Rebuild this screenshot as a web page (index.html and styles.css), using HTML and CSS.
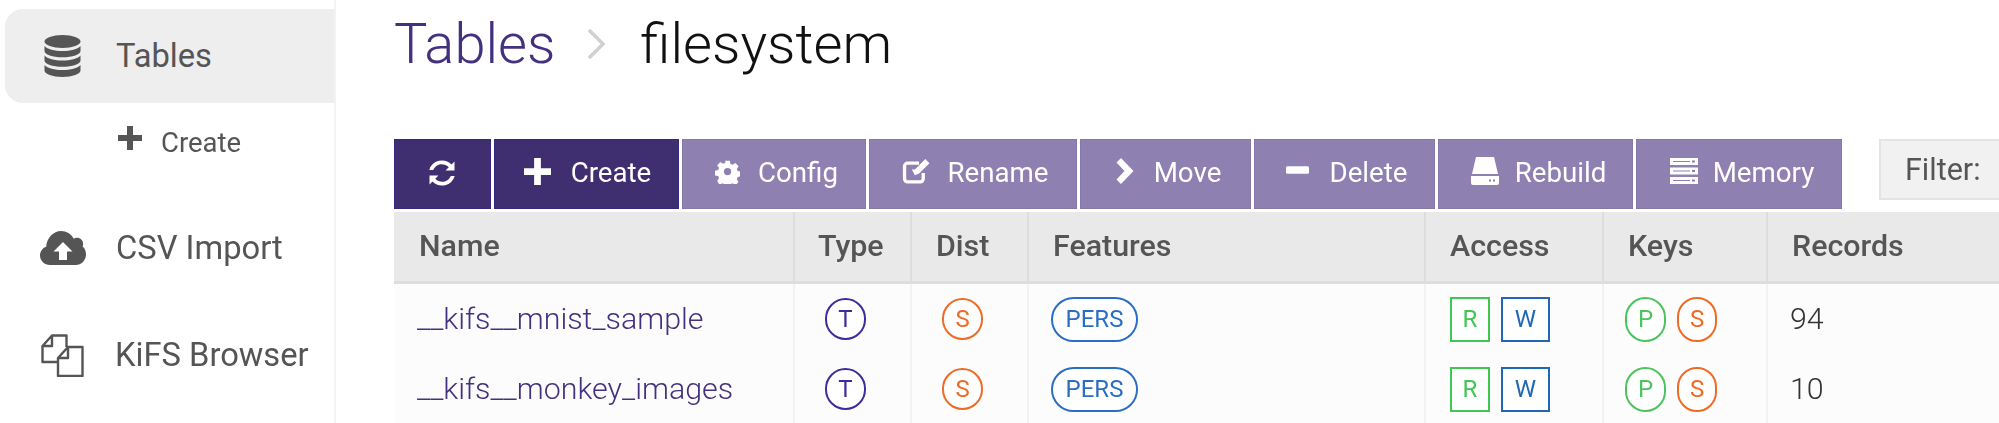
FILE: index.html
```html
<!DOCTYPE html>
<html lang="en">
<head>
<meta charset="utf-8">
<title>Tables - filesystem</title>
<link rel="stylesheet" href="styles.css">
</head>
<body>
<div class="app">
  <nav class="sidebar">
    <a class="nav-item active">
      <svg class="nav-icon" viewBox="0 0 37 42"><path d="M18.5 0C8.5 0 .5 3 .5 6.5S8.5 13 18.500 13s18-3 18-6.500S28.500 0 18.500 0z"/><path d="M.5 11v5c0 3.500 8 6.300 18 6.300s18-2.800 18-6.300v-5c-3 3.400-10 5-18 5S3.500 14.400.5 11z"/><path d="M.5 20.500v5c0 3.500 8 6.300 18 6.300s18-2.800 18-6.300v-5c-3 3.400-10 5-18 5s-15-1.600-18-5z"/><path d="M.5 30v5.500c0 3.500 8 6.500 18 6.500s18-3 18-6.500V30c-3 3.400-10 5-18 5S3.500 33.400.5 30z"/></svg>
      <span>Tables</span>
    </a>
    <a class="nav-sub">
      <svg class="sub-icon" viewBox="0 0 24 24"><path d="M9 0h6v9h9v6h-9v9H9v-9H0V9h9z"/></svg>
      <span>Create</span>
    </a>
    <a class="nav-item csv">
      <svg class="nav-icon cloud" viewBox="0 0 46 34"><path fill-rule="evenodd" d="M10 34C4.500 34 0 29.800 0 24.500c0-4 2.500-7.500 6.200-8.800C6.700 7 13.500 0 21 0c5.500 0 10.300 3 12.700 7.700 1-.6 2-.9 3.200-.9 3.500 0 6.200 2.700 6.200 6.100 0 .9-.2 1.700-.5 2.500 2.400 1.800 3.400 5 3.400 8.100 0 5.800-4.500 10.500-10.500 10.500zM23 11l-9.500 9.500H19V29h8v-8.500h5.500z"/></svg>
      <span>CSV Import</span>
    </a>
    <a class="nav-item kifs">
      <svg class="nav-icon files" viewBox="0 0 43 43"><path fill="none" stroke="#555" stroke-width="2.400" stroke-linejoin="round" d="M17 28H1.500V12L11 1.500h14.500V13M11 1.500V12H1.500M17 42V24L27 13h14.500v29zM27 13v11H17"/></svg>
      <span>KiFS Browser</span>
    </a>
  </nav>
  <main class="content">
    <h1 class="crumbs">
      <span class="crumb-link">Tables</span>
      <svg class="crumb-sep" viewBox="0 0 18 32"><path d="M2 2l14 14L2 30" fill="none" stroke="#d0d0d0" stroke-width="3.500"/></svg>
      <span class="crumb-current">filesystem</span>
    </h1>
    <div class="toolbar">
      <button class="btn dark b-refresh"><svg class="ic" viewBox="0 0 28 28"><path d="M26.500 2.500v9h-9l3.300-3.300A9.400 9.400 0 0 0 5.200 11H1.300A13.200 13.200 0 0 1 23.500 5.500zM1.500 25.500v-9h9l-3.300 3.300A9.400 9.400 0 0 0 22.800 17h3.900A13.200 13.200 0 0 1 4.500 22.500z"/></svg></button>
      <button class="btn dark b-create"><svg class="ic" viewBox="0 0 24 24"><path d="M9 0h6v9h9v6h-9v9H9v-9H0V9h9z"/></svg><span>Create</span></button>
      <button class="btn b-config"><svg class="ic" viewBox="0 0 24 24"><path fill-rule="evenodd" d="M9.500 0h5l.8 3.600 2.300 1 3.100-2 3.500 3.500-2 3.100 1 2.300 3.600.8v5l-3.600.8-1 2.300 2 3.100-3.500 3.500-3.100-2-2.300 1-.8 3.600h-5l-.8-3.600-2.300-1-3.100 2L.6 22.400l2-3.100-1-2.300-3.600-.8v-5l3.600-.8 1-2.300-2-3.100L4.100 1.500l3.100 2 2.300-1zM12 8a4 4 0 1 0 0 8 4 4 0 0 0 0-8z" transform="translate(1.600 1.600) scale(.87)"/></svg><span>Config</span></button>
      <button class="btn b-rename"><svg class="ic" viewBox="0 0 28 26"><path d="M20 14.500v5.500a3 3 0 0 1-3 3H5a3 3 0 0 1-3-3V8a3 3 0 0 1 3-3h11" fill="none" stroke="#fff" stroke-width="3.200"/><path d="M9 12l3 0 10-10 4 4-10 10-4 1.500z" transform="translate(0 -1)"/></svg><span>Rename</span></button>
      <button class="btn b-move"><svg class="ic" viewBox="0 0 18 26"><path d="M5 0l12.500 13L5 26l-4.500-4.500L8.500 13 .5 4.500z"/></svg><span>Move</span></button>
      <button class="btn b-delete"><svg class="ic" viewBox="0 0 24 8"><rect width="24" height="8" rx="1.500"/></svg><span>Delete</span></button>
      <button class="btn b-rebuild"><svg class="ic" viewBox="0 0 30 28"><path d="M6 0h18l4 17H2z"/><path fill-rule="evenodd" d="M1 19h28v7a2 2 0 0 1-2 2H3a2 2 0 0 1-2-2zM19 22.500v2h2v-2zm4 0v2h2v-2z"/></svg><span>Rebuild</span></button>
      <button class="btn b-memory"><svg class="ic" viewBox="0 0 30 28"><path fill-rule="evenodd" d="M1 1h28v7H1zM4 4v1h17V4zM23 3.500v2h3v-2zM1 10.500h28v7H1zM4 13.500v1h17v-1zM23 13v2h3v-2zM1 20h28v7H1zM4 23v1h17v-1zM23 22.500v2h3v-2z"/></svg><span>Memory</span></button>
      <div class="filter">Filter:</div>
    </div>
    <div class="grid header">
      <div>Name</div><div class="h-type">Type</div><div>Dist</div><div>Features</div><div>Access</div><div>Keys</div><div>Records</div>
    </div>
    <div class="grid row">
      <div class="name">__kifs__mnist_sample</div>
      <div class="c-type"><i class="pill type">T</i></div>
      <div class="c-dist"><i class="pill dist">S</i></div>
      <div class="c-feat"><i class="pill feat">PERS</i></div>
      <div class="c-access"><i class="box read">R</i><i class="box write">W</i></div>
      <div class="c-keys"><i class="pill key-p">P</i><i class="pill key-s">S</i></div>
      <div class="num">94</div>
    </div>
    <div class="grid row">
      <div class="name">__kifs__monkey_images</div>
      <div class="c-type"><i class="pill type">T</i></div>
      <div class="c-dist"><i class="pill dist">S</i></div>
      <div class="c-feat"><i class="pill feat">PERS</i></div>
      <div class="c-access"><i class="box read">R</i><i class="box write">W</i></div>
      <div class="c-keys"><i class="pill key-p">P</i><i class="pill key-s">S</i></div>
      <div class="num">10</div>
    </div>
  </main>
</div>
</body>
</html>
```
FILE: styles.css
```css
* { box-sizing: border-box; }
html, body { margin: 0; height: 423px; overflow: hidden; background: #fff; }
body { font-family: Roboto, sans-serif; color: #555; text-rendering: optimizeLegibility; }
.app { display: flex; height: 423px; filter: blur(0.4px); }

.sidebar { width: 336px; flex: none; padding: 9px 0 0 5px; border-right: 2px solid #f3f3f3; }
.nav-item { display: flex; align-items: center; height: 94px; padding-left: 39px; font-size: 32.7px; color: #555; }
.nav-item.active { background: #eee; border-radius: 18px 0 0 18px; padding-bottom: 1px; }
.nav-item.csv { margin-top: 25px; height: 90px; }
.nav-item.kifs { margin-top: 17px; height: 90px; }
.nav-icon { width: 37px; height: 42px; margin-right: 35px; fill: #555; flex: none; }
.nav-icon.cloud { width: 46px; height: 34px; margin: 0 30px 0 -4px; }
.nav-icon.files { width: 43px; height: 43px; margin: 0 31px 0 -3px; }
.nav-sub { display: flex; align-items: center; height: 75px; padding: 3px 0 0 113px; font-size: 27.500px; color: #555; }
.sub-icon { width: 24px; height: 24px; fill: #555; margin: -8px 19px 0 0; }

.content { flex: 1; min-width: 0; padding-left: 58px; }
.crumbs { display: flex; align-items: center; height: 139px; margin: 0; padding-bottom: 51px; font-size: 56px; font-weight: 300; }
.crumb-link { color: #44307f; }
.crumb-sep { width: 18px; height: 32px; margin: 0 35px 0 32px; }
.crumb-current { color: #111; }

.toolbar { display: flex; align-items: flex-start; gap: 3px; height: 73px; }
.btn { display: flex; align-items: center; justify-content: center; height: 70px; padding: 0 0 3px 5px; border: 1px solid #8578ab; background: #8e80b1; color: #fff; font: 400 27.700px Roboto, sans-serif; }
.btn.dark { background: #3f2f70; border-color: #332a80; padding-left: 2px; }
.btn.b-refresh { padding-left: 0; }
.ic { fill: #fff; flex: none; }
.b-refresh { width: 97px; } .b-refresh .ic { width: 28px; height: 28px; margin: 0 2px 0 0; }
.b-create { width: 185px; } .b-create .ic { width: 27px; height: 27px; margin: -3px 20px 0 0; }
.b-config { width: 184px; } .b-config .ic { width: 25px; height: 25px; margin: -3px 18px 0 0; }
.b-rename { width: 208px; } .b-rename .ic { width: 30px; height: 27px; margin: -3px 15px 0 0; }
.b-move { width: 171px; } .b-move .ic { width: 20px; height: 26px; margin: -3px 19px 0 0; }
.b-delete { width: 181px; } .b-delete .ic { width: 23px; height: 8px; margin: -6px 20px 0 0; }
.b-rebuild { width: 195px; } .b-rebuild .ic { width: 30px; height: 28px; margin: -3px 15px 0 0; }
.b-memory { width: 206px; } .b-memory .ic { width: 30px; height: 28px; margin: -3px 14px 0 0; }
.filter { flex: 1; height: 61px; margin-left: 34px; padding: 11px 0 0 24px; background: #f1f1f1; border: 2px solid #e4e4e4; border-right: 0; font-size: 30.500px; color: #555; white-space: nowrap; }

.grid { display: grid; grid-template-columns: 399px 117px 117px 397px 178px 164px 1fr; }
.header { height: 72px; background: #e9e9e9; border-bottom: 3px solid #ddd; font-size: 30.400px; font-weight: 500; }
.header > div { display: flex; align-items: center; padding: 0 0 2px 24px; border-left: 2px solid #ddd; }
.header > div:first-child { border-left: 0; padding-left: 25px; }
.header > .h-type { padding-left: 23px; }
.row { height: 70px; background: #fcfcfc; font-size: 30.400px; font-weight: 300; }
.row > div { display: flex; align-items: center; border-left: 2px solid #f2f2f2; }
.row > div:first-child { border-left: 0; padding: 0 0 2px 23px; }
.c-type { justify-content: center; padding-right: 14px; }
.c-dist { justify-content: center; padding-right: 14px; }
.c-feat { padding-left: 22px; }
.c-access { padding-left: 24px; }
.c-keys { padding-left: 21px; }
.row > .num { padding: 0 0 2px 22px; }
.name { color: #44307f; }
.num { color: #333; }
.pill, .box { display: flex; align-items: center; justify-content: center; font-style: normal; font-weight: 400; height: 45px; font-size: 24px; background: #fff; border: 2px solid currentColor; }
.pill { border-radius: 23px; width: 41px; }
.type, .dist { height: 42px; }
.type { color: #3d2c9c; }
.dist, .key-s { color: #ee6a25; }
.feat { width: 87px; color: #2a6ec4; }
.box { width: 40px; }
.box.write { width: 49px; color: #1e68b5; margin-left: 11px; }
.box.read { color: #3fc653; }
.key-p { color: #4ec25f; }
.key-s { margin-left: 11px; width: 40px; }
```
